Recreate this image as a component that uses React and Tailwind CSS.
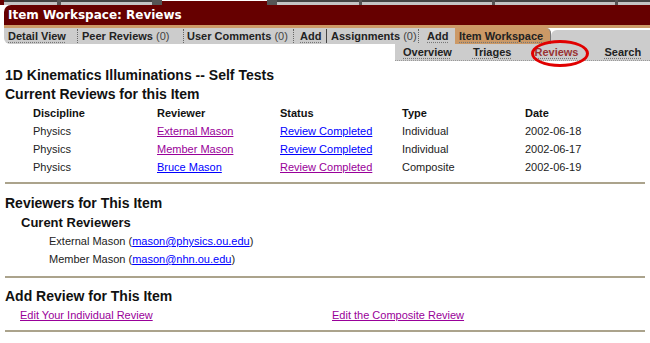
import React from "react";

const topTabs = [
  { w: 53 },
  { w: 4, gap: true },
  { w: 91 },
  { w: 10, gap: true },
  { w: 105, white: true },
  { w: 10, gap: true },
  { w: 82 },
  { w: 3, gap: true },
  { w: 130 },
  { w: 3, gap: true },
  { w: 120 },
  { w: 3, gap: true },
  { w: 32 },
];

const reviews = [
  { discipline: "Physics", reviewer: "External Mason", rv: true, status: "Review Completed", sv: false, type: "Individual", date: "2002-06-18" },
  { discipline: "Physics", reviewer: "Member Mason", rv: true, status: "Review Completed", sv: false, type: "Individual", date: "2002-06-17" },
  { discipline: "Physics", reviewer: "Bruce Mason", rv: false, status: "Review Completed", sv: true, type: "Composite", date: "2002-06-19" },
];

const TabLink = ({ children, className = "" }) => (
  <a className={"whitespace-nowrap underline decoration-dotted decoration-[#777] underline-offset-2 " + className}>{children}</a>
);

// one item of the sub nav, with its separator at the right edge
const NavCell = ({ w, pr, solid, children }) => (
  <div className="flex shrink-0 items-center justify-between" style={{ width: w, paddingRight: pr }}>
    {children}
    {solid ? (
      <span className="inline-block h-[14px] w-px bg-[#444]" />
    ) : (
      <span className="inline-block h-[14px] w-px border-l border-dotted border-[#666]" />
    )}
  </div>
);

const Count = () => <span className="font-normal text-[#444]">(0)</span>;

const Rule = () => <div className="mx-[5px] h-[2px] bg-[#aba38c]" />;

export default function App() {
  return (
    <div className="w-[650px] h-[343px] overflow-hidden bg-white text-[#111]" style={{ fontFamily: "'Liberation Sans', Arial, sans-serif" }}>
      {/* tabs above, cut off */}
      <div className="flex h-[5px] overflow-hidden bg-[#660000] pl-[4px]">
        {topTabs.map((t, i) => (
          <div
            key={i}
            className={
              t.gap
                ? "h-[5px] shrink-0 bg-[#555]"
                : t.white
                ? "h-[5px] shrink-0 border-t border-white bg-[#660000]"
                : "h-[5px] shrink-0 border-t-2 border-[#444] bg-[#c4c4c4]"
            }
            style={{ width: t.w }}
          />
        ))}
      </div>

      {/* title bar */}
      <div className="ml-[4px] flex h-[20px] items-center rounded-tl-[7px] bg-[#660000] pl-[4px] text-[12px] font-bold text-white" style={{ fontFamily: "'DejaVu Sans', Verdana, sans-serif" }}>
        Item Workspace: Reviews
      </div>
      <div className="ml-[4px] h-[3px] bg-[#cc9966]" />

      {/* sub nav row 1 */}
      <div className="ml-[4px] flex h-[16px] whitespace-nowrap text-[11px] font-bold text-[#222]">
        <div className="flex flex-1 items-center rounded-bl-[6px] bg-[#cccccc] pl-[4px]">
          <NavCell w={74} pr={4}>
            <TabLink>Detail View</TabLink>
          </NavCell>
          <NavCell w={105} pr={3}>
            <span>Peer Reviews <Count /></span>
          </NavCell>
          <NavCell w={113} pr={6}>
            <span>User Comments <Count /></span>
          </NavCell>
          <NavCell w={31} pr={4} solid>
            <TabLink>Add</TabLink>
          </NavCell>
          <NavCell w={96} pr={8}>
            <span>Assignments <Count /></span>
          </NavCell>
          <TabLink>Add</TabLink>
        </div>
        <div className="flex w-[96px] shrink-0 items-center rounded-tr-[5px] border-r border-[#777] bg-[#cc9966] pl-[4px]">
          <TabLink>Item Workspace</TabLink>
        </div>
        <div className="mt-[2px] w-[99px] shrink-0 rounded-tl-[6px] bg-[#cccccc]" />
      </div>

      {/* sub nav row 2 */}
      <div className="flex h-[17px] justify-end">
        <div className="relative flex w-[255px] items-center border-b border-dotted border-[#999] bg-[#cccccc] pl-[8px] text-[11px] font-bold text-[#222]">
          <TabLink>Overview</TabLink>
          <TabLink className="ml-[21px]">Triages</TabLink>
          <TabLink className="ml-[23px] text-[#993333]">Reviews</TabLink>
          <TabLink className="ml-[26px]">Search</TabLink>
          <div className="pointer-events-none absolute left-[136px] top-[-4px] h-[27px] w-[58px] rounded-[50%] border-[3px] border-[#e00000]" />
        </div>
      </div>

      {/* content */}
      <div className="pl-[5px] pt-[5px] text-[14px] font-bold leading-[19px]">1D Kinematics Illuminations -- Self Tests</div>
      <div className="pl-[5px] text-[14px] font-bold leading-[19px]">Current Reviews for this Item</div>

      <div className="pl-[33px] text-[11px]">
        <div className="grid h-[18px] grid-cols-[124px_123px_122px_123px_1fr] items-center font-bold">
          <div>Discipline</div>
          <div>Reviewer</div>
          <div>Status</div>
          <div>Type</div>
          <div>Date</div>
        </div>
        {reviews.map((r, i) => (
          <div key={i} className="grid h-[18px] grid-cols-[124px_123px_122px_123px_1fr] items-center text-[#222]">
            <div>{r.discipline}</div>
            <div>
              <a className={"underline " + (r.rv ? "text-[#990099]" : "text-[#0000ff]")}>{r.reviewer}</a>
            </div>
            <div>
              <a className={"underline " + (r.sv ? "text-[#990099]" : "text-[#0000ff]")}>{r.status}</a>
            </div>
            <div>{r.type}</div>
            <div>{r.date}</div>
          </div>
        ))}
      </div>

      <div className="mt-[6px]">
        <Rule />
      </div>

      <div className="mt-[10px] pl-[5px] text-[14px] font-bold leading-[19px]">Reviewers for This Item</div>
      <div className="pl-[21px] text-[13px] font-bold leading-[19px]">Curent Reviewers</div>
      <div className="pl-[49px] text-[11px] leading-[18px] text-[#222]">
        <div>
          External Mason (<a className="text-[#0000ff] underline">mason@physics.ou.edu</a>)
        </div>
        <div>
          Member Mason (<a className="text-[#0000ff] underline">mason@nhn.ou.edu</a>)
        </div>
      </div>

      <div className="mt-[8px]">
        <Rule />
      </div>

      <div className="mt-[9px] pl-[5px] text-[14px] font-bold leading-[19px]">Add Review for This Item</div>
      <div className="flex h-[18px] items-center text-[11px]">
        <a className="ml-[20px] w-[312px] text-[#990099] underline">Edit Your Individual Review</a>
        <a className="text-[#990099] underline">Edit the Composite Review</a>
      </div>

      <div className="mt-[6px]">
        <Rule />
      </div>
    </div>
  );
}
